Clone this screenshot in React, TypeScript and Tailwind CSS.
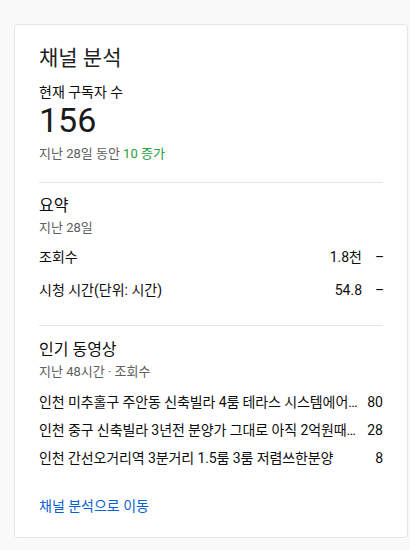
const videos = [
  { title: '인천 미추홀구 주안동 신축빌라 4룸 테라스 시스템에어컨 풀옵션 분양', views: '80' },
  { title: '인천 중구 신축빌라 3년전 분양가 그대로 아직 2억원때 분양중', views: '28' },
  { title: '인천 간선오거리역 3분거리 1.5룸 3룸 저렴쓰한분양', views: '8' },
];

export default function App() {
  return (
    <div
      className="min-h-[550px] w-full bg-[#f9f9f9] pt-[24px] pl-[14px] pb-[12px]"
      style={{ fontFamily: 'Roboto, "Noto Sans CJK KR", sans-serif' }}
    >
      <div className="w-[394px] rounded-[4px] border border-[#e5e5e5] bg-white px-[24px] pt-[19px] pb-[21px] text-[#0d0d0d]">
        <h2 className="text-[21px] leading-[28px] font-normal text-[#212121]">채널 분석</h2>
        <div className="mt-[10px] text-[14px] leading-[20px]">현재 구독자 수</div>
        <div className="text-[34px] leading-[36px] text-[#1a1a1a]">156</div>
        <div className="mt-[7px] text-[13px] leading-[18px] text-[#606060]">
          지난 28일 동안 <span className="text-[#23a03a]">10 증가</span>
        </div>

        <div className="mt-[19px] border-t border-[#e5e5e5]" />

        <div className="pt-[12px]">
          <h3 className="text-[16px] leading-[22px]">요약</h3>
          <div className="mt-[2px] text-[13px] leading-[18px] text-[#606060]">지난 28일</div>
          <div className="mt-[10px] flex items-center text-[14px] leading-[20px]">
            <span className="flex-1">조회수</span>
            <span>1.8천</span>
            <span className="ml-[13px] w-[8px] text-right">–</span>
          </div>
          <div className="mt-[13px] flex items-center text-[14px] leading-[20px]">
            <span className="flex-1">시청 시간(단위: 시간)</span>
            <span>54.8</span>
            <span className="ml-[13px] w-[8px] text-right">–</span>
          </div>
        </div>

        <div className="mt-[25px] border-t border-[#e5e5e5]" />

        <div className="pt-[13px]">
          <h3 className="text-[16px] leading-[22px]">인기 동영상</h3>
          <div className="mt-[2px] text-[13px] leading-[18px] text-[#606060]">지난 48시간 · 조회수</div>
          <div className="mt-[7px] flex flex-col">
            {videos.map((v) => (
              <div key={v.views} className="flex items-center gap-[8px] text-[14px] leading-[28px]">
                <span className="min-w-0 flex-1 truncate tracking-[-0.1px]">{v.title}</span>
                <span>{v.views}</span>
              </div>
            ))}
          </div>
        </div>

        <a href="#" className="mt-[24px] block text-[14px] leading-[20px] text-[#065fd4]">
          채널 분석으로 이동
        </a>
      </div>
    </div>
  );
}
